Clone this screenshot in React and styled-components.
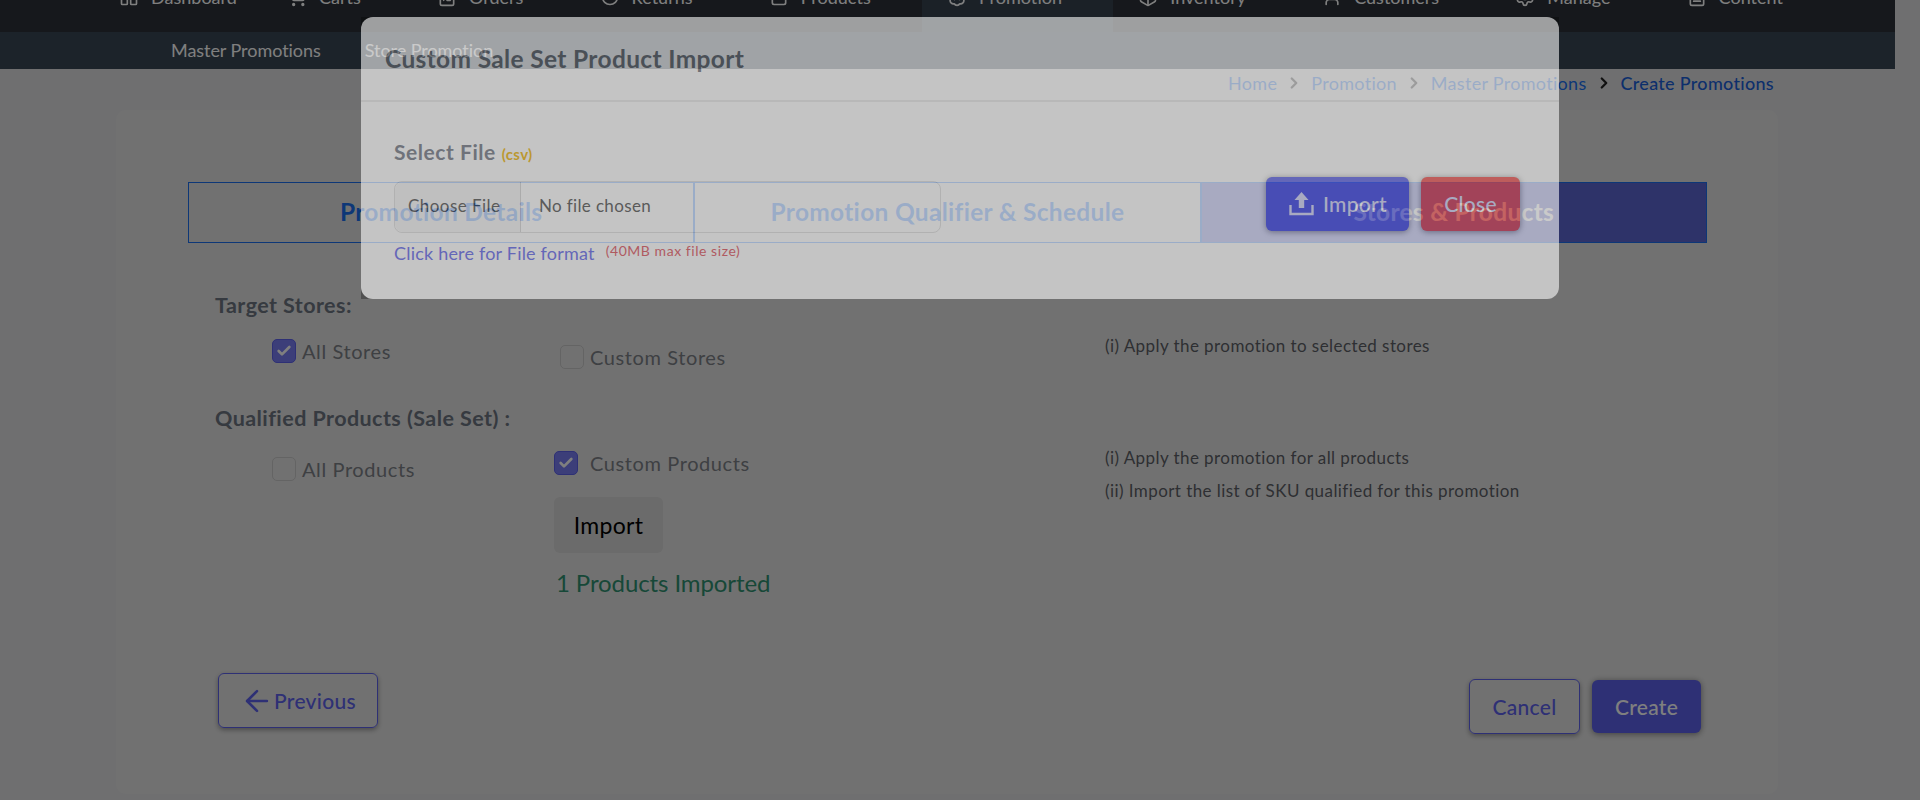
import styled, { createGlobalStyle } from "styled-components";
import {
  LayoutGrid,
  ShoppingCart,
  ClipboardList,
  RotateCw,
  Archive,
  BadgePercent,
  Package,
  User,
  Settings,
  FileText,
  ChevronDown,
  ChevronRight,
  ArrowLeft,
  Check,
} from "lucide-react";

const PRIMARY = "#5c60ea";
const LINK = "#1a6fee";

const GlobalStyle = createGlobalStyle`
  html, body {
    margin: 0;
    height: 800px;
    overflow: hidden;
    background: #dfdfe1;
    font-family: "Lato", "Open Sans", sans-serif;
  }
  * { box-sizing: border-box; }
`;

const Page = styled.div`
  width: 1895px;
  margin-top: -30px;
`;

const TopBar = styled.nav`
  display: flex;
  height: 62px;
  padding-left: 94px;
  background: #2c3138;
`;

const NavItem = styled.div`
  display: flex;
  align-items: center;
  gap: 12px;
  height: 100%;
  padding: 0 25.1px 8px;
  font-size: 18px;
  color: #fff;
  background: ${(p) => (p.$active ? "#36434f" : "transparent")};
  svg { flex: none; }
`;

const SubBar = styled.div`
  display: flex;
  align-items: center;
  gap: 44px;
  height: 37px;
  padding: 0 0 2px 171px;
  background: #384654;
`;

const SubLink = styled.a`
  font-size: 18px;
  letter-spacing: -0.05px;
  color: #fff;
`;

const Crumbs = styled.div`
  display: flex;
  justify-content: flex-end;
  align-items: center;
  gap: 6px;
  height: 28px;
  padding-right: 121px;
  font-size: 18px;
  letter-spacing: 0.3px;
  color: ${LINK};
  svg { color: #222; margin: 0 2px; }
`;

const Crumb = styled.span`
  font-weight: ${(p) => (p.$current ? 500 : 400)};
  color: ${(p) => (p.$current ? "#1a5fd8" : LINK)};
`;

const Card = styled.main`
  margin: 13px 117px 0 116px;
  padding: 72px 71px 60px 72px;
  background: #e3e3e3;
  border-radius: 10px;
`;

const Tabs = styled.div`
  display: grid;
  grid-template-columns: repeat(3, 1fr);
  height: 61px;
`;

const Tab = styled.div`
  display: flex;
  align-items: center;
  justify-content: center;
  padding-bottom: 2px;
  border: 1px solid ${LINK};
  font-size: 24.5px;
  font-weight: 700;
  letter-spacing: 0.3px;
  color: ${(p) => (p.$active ? "#fff" : LINK)};
  background: ${(p) => (p.$active ? "#5d66d2" : "transparent")};
`;

const Form = styled.section`
  padding: 48px 0 0 27px;
`;

const Heading = styled.h3`
  margin: ${(p) => p.$top || 0}px 0 0;
  font-size: 21.5px;
  line-height: 28px;
  font-weight: 700;
  letter-spacing: 0.43px;
  color: #6c7480;
`;

const OptionRow = styled.div`
  display: grid;
  grid-template-columns: 282px 551px 1fr;
  margin: ${(p) => p.$top}px 0 0 57px;
`;

const Column = styled.div`
  padding-top: ${(p) => p.$top || 0}px;
`;

const Option = styled.label`
  display: flex;
  align-items: center;
  height: 26px;
  margin-left: ${(p) => p.$inset || 0}px;
  font-size: 20px;
  letter-spacing: 0.6px;
  color: #7c8086;
`;

const Box = styled.span`
  display: flex;
  align-items: center;
  justify-content: center;
  flex: none;
  width: 24px;
  height: 24px;
  margin-right: ${(p) => p.$gap}px;
  border-radius: 5px;
  border: 1px solid ${(p) => (p.$on ? PRIMARY : "#c8c8c8")};
  background: ${(p) => (p.$on ? "#787cf2" : "transparent")};
  color: #fff;
`;

const GreyButton = styled.button`
  display: block;
  width: 109px;
  height: 56px;
  margin-top: 21px;
  border: 0;
  border-radius: 6px;
  background: #d6d6d6;
  font: inherit;
  font-size: 23px;
  letter-spacing: 0.3px;
  color: #000;
`;

const Status = styled.div`
  margin: 14px 0 0 2px;
  font-size: 24px;
  line-height: 32px;
  letter-spacing: -0.1px;
  color: #2f9070;
`;

const Hint = styled.p`
  margin: 0;
  font-size: 17px;
  line-height: 33px;
  letter-spacing: 0.43px;
  color: #5c5f66;
`;

const Footer = styled.div`
  display: flex;
  justify-content: space-between;
  align-items: flex-start;
  margin-top: 74px;
  padding: 0 6px 0 30px;
`;

const FooterGroup = styled.div`
  display: flex;
  align-items: center;
  gap: 12px;
  margin-top: ${(p) => p.$top || 0}px;
`;

const OutlineButton = styled.button`
  display: flex;
  align-items: center;
  justify-content: center;
  width: ${(p) => p.$w}px;
  height: 55px;
  padding: 0;
  border: 1.5px solid ${PRIMARY};
  border-radius: 6px;
  background: transparent;
  box-shadow: 0 2px 5px rgba(0, 0, 0, 0.35);
  font: inherit;
  font-size: 21px;
  font-weight: 500;
  letter-spacing: 0.3px;
  color: ${PRIMARY};
`;

const SolidButton = styled.button`
  display: flex;
  align-items: center;
  justify-content: center;
  gap: 8px;
  width: ${(p) => p.$w}px;
  height: ${(p) => p.$h}px;
  padding: 0 0 ${(p) => p.$lift || 0}px;
  border: 0;
  border-radius: 6px;
  background: ${(p) => p.$bg || PRIMARY};
  box-shadow: 0 1px 6px rgba(0, 0, 0, 0.45);
  font: inherit;
  font-size: ${(p) => p.$size || 21}px;
  font-weight: 500;
  letter-spacing: 0.3px;
  color: #fff;
`;

const Backdrop = styled.div`
  position: fixed;
  inset: 0;
  background: rgba(0, 0, 0, 0.5);
`;

const Modal = styled.div`
  position: fixed;
  top: 17px;
  left: 361px;
  width: 1198px;
  height: 282px;
  background: #fff;
  border-radius: 12px;
  opacity: 0.585;
`;

const ModalHead = styled.header`
  display: flex;
  align-items: center;
  height: 85px;
  padding: 0 24px;
  border-bottom: 2px solid #ebebeb;
`;

const ModalTitle = styled.h2`
  margin: 0;
  font-size: 24.5px;
  font-weight: 700;
  letter-spacing: 0.35px;
  color: #6d7279;
`;

const ModalBody = styled.div`
  display: flex;
  justify-content: space-between;
  align-items: flex-start;
  padding: 36px 39px 0 33px;
`;

const FileColumn = styled.div`
  width: 547px;
`;

const FileLabel = styled.div`
  display: flex;
  align-items: baseline;
  gap: 6px;
  height: 26px;
  margin: 1px 0 16px;
  font-size: 21px;
  font-weight: 700;
  letter-spacing: 0.55px;
  color: #6e7480;
`;

const Csv = styled.span`
  font-size: 15px;
  font-weight: 700;
  letter-spacing: 0.3px;
  color: #f0b400;
`;

const FileInput = styled.input`
  display: block;
  width: 100%;
  height: 52px;
  padding: 0;
  border: 1px solid #dedede;
  border-radius: 8px;
  font-family: inherit;
  font-size: 17px;
  letter-spacing: 0.35px;
  color: #4a4a4a;
  background: transparent;
  &::file-selector-button {
    width: 126px;
    height: 50px;
    margin: 0 18px 0 0;
    padding: 0 0 4px 13px;
    border: 0;
    border-right: 1px solid #d4d4d4;
    border-radius: 8px 0 0 8px;
    background: #f6f6f6;
    font: inherit;
    letter-spacing: 0.45px;
    text-align: left;
    color: #4a4a4a;
  }
`;

const FormatRow = styled.div`
  display: flex;
  align-items: flex-start;
  gap: 11px;
  margin-top: 8px;
`;

const FormatLink = styled.a`
  font-size: 18px;
  line-height: 24px;
  letter-spacing: 0.2px;
  color: #5c60ea;
`;

const SizeNote = styled.span`
  margin-top: 1px;
  font-size: 14px;
  line-height: 18px;
  letter-spacing: 0.55px;
  color: #dc4a55;
`;

const ModalActions = styled.div`
  display: flex;
  gap: 12px;
  margin-top: 39px;
`;

const navItems = [
  { label: "Dashboard", Icon: LayoutGrid, noCaret: true },
  { label: "Carts", Icon: ShoppingCart },
  { label: "Orders", Icon: ClipboardList },
  { label: "Returns", Icon: RotateCw },
  { label: "Products", Icon: Archive },
  { label: "Promotion", Icon: BadgePercent, active: true },
  { label: "Inventory", Icon: Package },
  { label: "Customers", Icon: User },
  { label: "Manage", Icon: Settings },
  { label: "Content", Icon: FileText },
];

const CheckBox = ({ on, gap = 6 }) => (
  <Box $on={on} $gap={gap}>
    {on && <Check size={16} strokeWidth={4} />}
  </Box>
);

// tray with a solid arrow, lucide's Upload is only outlined
const UploadIcon = () => (
  <svg width="27" height="27" viewBox="0 0 27 27" fill="none">
    <path d="M13.5 2 L20.5 10 H16.2 V18 H10.8 V10 H6.5 Z" fill="currentColor" />
    <path d="M2.5 15 V24 H24.5 V15" stroke="currentColor" strokeWidth="2.4" />
  </svg>
);

export default function App() {
  return (
    <>
      <GlobalStyle />
      <Page>
        <TopBar>
          {navItems.map(({ label, Icon, noCaret, active }) => (
            <NavItem key={label} $active={active}>
              <Icon size={20} />
              <span>{label}</span>
              {!noCaret && <ChevronDown size={14} />}
            </NavItem>
          ))}
        </TopBar>
        <SubBar>
          <SubLink>Master Promotions</SubLink>
          <SubLink>Store Promotion</SubLink>
        </SubBar>
        <Crumbs>
          <Crumb>Home</Crumb>
          <ChevronRight size={18} strokeWidth={3} />
          <Crumb>Promotion</Crumb>
          <ChevronRight size={18} strokeWidth={3} />
          <Crumb>Master Promotions</Crumb>
          <ChevronRight size={18} strokeWidth={3} />
          <Crumb $current>Create Promotions</Crumb>
        </Crumbs>
        <Card>
          <Tabs>
            <Tab>Promotion Details</Tab>
            <Tab>Promotion Qualifier &amp; Schedule</Tab>
            <Tab $active>Stores &amp; Products</Tab>
          </Tabs>
          <Form>
            <Heading>Target Stores:</Heading>
            <OptionRow $top={10}>
              <Column $top={9}>
                <Option>
                  <CheckBox on />
                  All Stores
                </Option>
              </Column>
              <Column $top={15}>
                <Option $inset={6}>
                  <CheckBox />
                  Custom Stores
                </Option>
              </Column>
              <Hint>(i) Apply the promotion to selected stores</Hint>
            </OptionRow>
            <Heading $top={34}>Qualified Products (Sale Set) :</Heading>
            <OptionRow $top={9}>
              <Column $top={15}>
                <Option>
                  <CheckBox />
                  All Products
                </Option>
              </Column>
              <Column $top={9}>
                <Option>
                  <CheckBox on gap={12} />
                  Custom Products
                </Option>
                <GreyButton>Import</GreyButton>
                <Status>1 Products Imported</Status>
              </Column>
              <div>
                <Hint>(i) Apply the promotion for all products</Hint>
                <Hint>(ii) Import the list of SKU qualified for this promotion</Hint>
              </div>
            </OptionRow>
          </Form>
          <Footer>
            <OutlineButton $w={160}>
              <ArrowLeft size={34} strokeWidth={1.8} />
              Previous
            </OutlineButton>
            <FooterGroup $top={6}>
              <OutlineButton $w={111}>Cancel</OutlineButton>
              <SolidButton $w={109} $h={53}>
                Create
              </SolidButton>
            </FooterGroup>
          </Footer>
        </Card>
      </Page>
      <Backdrop />
      <Modal>
        <ModalHead>
          <ModalTitle>Custom Sale Set Product Import</ModalTitle>
        </ModalHead>
        <ModalBody>
          <FileColumn>
            <FileLabel>
              Select File <Csv>(csv)</Csv>
            </FileLabel>
            <FileInput type="file" />
            <FormatRow>
              <FormatLink>Click here for File format</FormatLink>
              <SizeNote>(40MB max file size)</SizeNote>
            </FormatRow>
          </FileColumn>
          <ModalActions>
            <SolidButton $w={143} $h={54} $size={21} $lift={2}>
              <UploadIcon />
              Import
            </SolidButton>
            <SolidButton $w={99} $h={54} $size={21} $lift={2} $bg="#f5504d">
              Close
            </SolidButton>
          </ModalActions>
        </ModalBody>
      </Modal>
    </>
  );
}
